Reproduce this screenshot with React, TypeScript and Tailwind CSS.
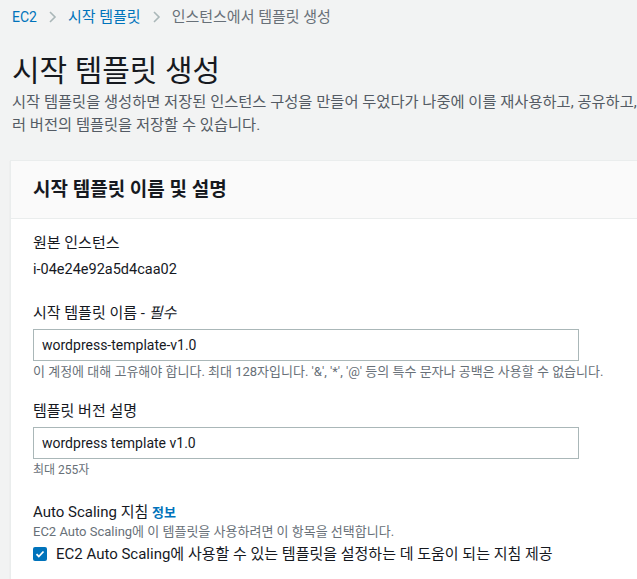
import React from "react"

const font = "font-['Roboto','Noto_Sans_CJK_KR',sans-serif]"

const Chevron = () => (
  <svg className="mx-[11px]" width="9" height="14" viewBox="0 0 9 14">
    <path d="M2 2l5 5-5 5" fill="none" stroke="#aab7b8" strokeWidth="1.6" />
  </svg>
)

const App: React.FC = () => {
  return (
    <main className={`w-[637px] h-[579px] overflow-hidden bg-[#f2f3f3] text-[#16191f] ${font}`}>
      <nav className="flex items-center h-[33px] pl-3 pt-[1px] text-[15px] leading-[20px]">
        <a className="text-[#0073bb] text-[14px]">EC2</a>
        <Chevron />
        <a className="text-[#0073bb]">시작 템플릿</a>
        <Chevron />
        <span className="text-[#687078]">인스턴스에서 템플릿 생성</span>
      </nav>

      <header className="pl-3 pt-[20px]">
        <h1 className="text-[30px] leading-[36px] font-normal">시작 템플릿 생성</h1>
        <p className="mt-[2px] text-[15.3px] leading-[23px] text-[#545b64] whitespace-nowrap">
          시작 템플릿을 생성하면 저장된 인스턴스 구성을 만들어 두었다가 나중에 이를 재사용하고, 공유하고,
          <br />
          러 버전의 템플릿을 저장할 수 있습니다.
        </p>
      </header>

      <section className="mt-[23px] ml-[10px] w-[660px] border border-[#eaeded] bg-white shadow-[0_1px_1px_rgba(0,28,36,0.1)]">
        <div className="h-[58px] flex items-center pl-[22px] bg-[#fafafa] border-b border-[#eaeded]">
          <h2 className="text-[19px] font-bold leading-[24px]">시작 템플릿 이름 및 설명</h2>
        </div>

        <div className="pl-[22px] pt-[14px] text-[15px] leading-[20px]">
          <div>
            <div>원본 인스턴스</div>
            <div className="mt-[7px] text-[14.5px]">i-04e24e92a5d4caa02</div>
          </div>

          <div className="mt-[23px]">
            <label className="block">
              시작 템플릿 이름 - <i>필수</i>
            </label>
            <input
              readOnly
              value="wordpress-template-v1.0"
              className="mt-[6px] block w-[546px] h-[32px] px-[8px] border border-[#aab7b8] text-[14px] text-[#16191f] outline-none"
            />
            <div className="mt-[2px] text-[13px] leading-[18px] text-[#687078]">
              이 계정에 대해 고유해야 합니다. 최대 128자입니다. '&amp;', '*', '@' 등의 특수 문자나 공백은 사용할 수 없습니다.
            </div>
          </div>

          <div className="mt-[20px]">
            <label className="block">템플릿 버전 설명</label>
            <input
              readOnly
              value="wordpress template v1.0"
              className="mt-[6px] block w-[546px] h-[32px] px-[8px] border border-[#aab7b8] text-[14px] text-[#16191f] outline-none"
            />
            <div className="mt-[2px] text-[12px] leading-[18px] text-[#687078]">최대 255자</div>
          </div>

          <div className="mt-[23px]">
            <div>
              Auto Scaling 지침 <a className="text-[#0073bb] text-[13px] font-bold">정보</a>
            </div>
            <div className="text-[13px] leading-[18px] text-[#687078]">
              EC2 Auto Scaling에 이 템플릿을 사용하려면 이 항목을 선택합니다.
            </div>
            <label className="mt-[3px] flex items-center gap-[9px]">
              <span className="w-[14px] h-[14px] rounded-[2px] bg-[#0073bb] flex items-center justify-center">
                <svg width="10" height="10" viewBox="0 0 10 10">
                  <path d="M1.5 5.2l2.3 2.3 4.7-5" fill="none" stroke="white" strokeWidth="1.8" />
                </svg>
              </span>
              <span>EC2 Auto Scaling에 사용할 수 있는 템플릿을 설정하는 데 도움이 되는 지침 제공</span>
            </label>
          </div>
        </div>
        <div className="h-[20px]" />
      </section>
    </main>
  )
}

export default App
